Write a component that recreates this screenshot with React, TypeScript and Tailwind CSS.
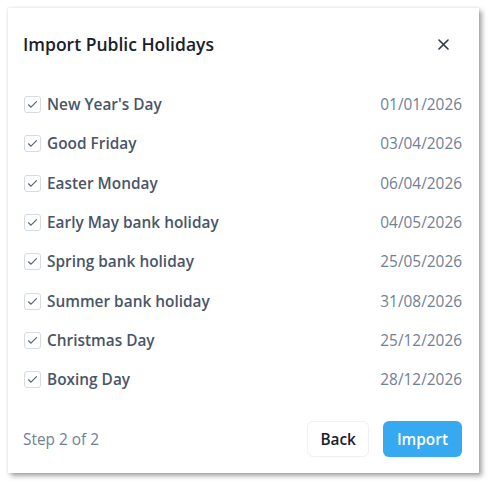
import { useState } from 'react';

interface Holiday {
  readonly name: string;
  readonly date: string;
}

const holidays: readonly Holiday[] = [
  { name: "New Year's Day", date: '01/01/2026' },
  { name: 'Good Friday', date: '03/04/2026' },
  { name: 'Easter Monday', date: '06/04/2026' },
  { name: 'Early May bank holiday', date: '04/05/2026' },
  { name: 'Spring bank holiday', date: '25/05/2026' },
  { name: 'Summer bank holiday', date: '31/08/2026' },
  { name: 'Christmas Day', date: '25/12/2026' },
  { name: 'Boxing Day', date: '28/12/2026' }
];

function CheckBox({ checked, onToggle }: { checked: boolean; onToggle: () => void }) {
  return (
    <button
      type="button"
      onClick={onToggle}
      className="flex h-[17px] w-[17px] shrink-0 items-center justify-center rounded-[3px] border border-[#d5dbe3] bg-white"
    >
      {checked && (
        <svg width="11" height="9" viewBox="0 0 11 9" fill="none">
          <path
            d="M1.5 4.8 L4 7.2 L9.5 1.6"
            stroke="#5a6474"
            strokeWidth="1.2"
            strokeLinecap="round"
            strokeLinejoin="round"
          />
        </svg>
      )}
    </button>
  );
}

export default function App() {
  const [selected, setSelected] = useState<readonly boolean[]>(holidays.map(() => true));

  const toggle = (index: number) =>
    setSelected((current) => current.map((value, i) => (i === index ? !value : value)));

  return (
    <div className="min-h-screen bg-white p-2 font-['Open_Sans',sans-serif]">
      <div className="w-[471px] bg-white shadow-[0_0_3px_rgba(0,0,0,0.12),3px_3px_5px_rgba(0,0,0,0.35)]">
        <div className="flex h-[72px] items-center justify-between pl-[15px] pr-[30px]">
          <h2 className="text-[17.5px] font-semibold text-[#1a202c]">Import Public Holidays</h2>
          <button type="button" className="text-[#2d3748]">
            <svg width="11" height="11" viewBox="0 0 11 11" fill="none">
              <path d="M1 1 L10 10 M10 1 L1 10" stroke="currentColor" strokeWidth="1.6" strokeLinecap="round" />
            </svg>
          </button>
        </div>

        <ul className="pl-4 pr-[17px] pt-[5px]">
          {holidays.map((holiday, index) => (
            <li key={holiday.name} className="flex h-[39.3px] items-center justify-between">
              <label className="flex items-center gap-[6px]">
                <CheckBox checked={selected[index]} onToggle={() => toggle(index)} />
                <span className="text-[15.4px] font-semibold text-[#4a5568]">{holiday.name}</span>
              </label>
              <span className="text-[15.4px] text-[#718096]">{holiday.date}</span>
            </li>
          ))}
        </ul>

        <div className="flex items-center justify-between pb-4 pl-[15px] pr-[17px] pt-[22px]">
          <span className="text-[15.4px] text-[#718096]">Step 2 of 2</span>
          <div className="flex gap-[14px]">
            <button
              type="button"
              className="h-9 rounded-md border border-[#edf0f4] bg-white px-[12px] text-[15.4px] font-semibold text-[#1a202c]"
            >
              Back
            </button>
            <button
              type="button"
              className="h-9 rounded-md bg-[#36a9f0] px-[14px] text-[15.4px] font-semibold text-white"
            >
              Import
            </button>
          </div>
        </div>
      </div>
    </div>
  );
}
